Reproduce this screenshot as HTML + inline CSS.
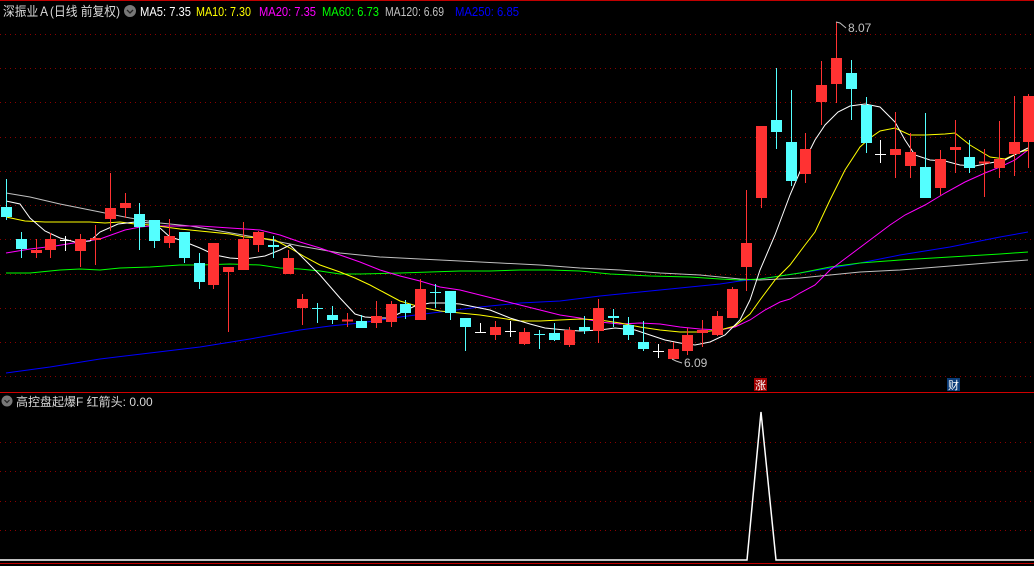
<!DOCTYPE html>
<html><head><meta charset="utf-8"><style>
html,body{margin:0;padding:0;background:#000;width:1034px;height:566px;overflow:hidden}
svg{display:block}
text{font-family:"Liberation Sans","Noto Sans CJK SC",sans-serif}
</style></head><body>
<svg width="1034" height="566" viewBox="0 0 1034 566" xmlns="http://www.w3.org/2000/svg">
<rect width="1034" height="566" fill="#000"/>
<line x1="0" y1="0.5" x2="1034" y2="0.5" stroke="#c00000"/>
<g stroke="#8b0000" stroke-dasharray="1 4" stroke-width="1">
<line x1="0" y1="34.5" x2="1034" y2="34.5"/><line x1="0" y1="68.5" x2="1034" y2="68.5"/>
<line x1="0" y1="102.5" x2="1034" y2="102.5"/><line x1="0" y1="137.5" x2="1034" y2="137.5"/>
<line x1="0" y1="171.5" x2="1034" y2="171.5"/><line x1="0" y1="205.5" x2="1034" y2="205.5"/>
<line x1="0" y1="239.5" x2="1034" y2="239.5"/><line x1="0" y1="274.5" x2="1034" y2="274.5"/>
<line x1="0" y1="308.5" x2="1034" y2="308.5"/><line x1="0" y1="342.5" x2="1034" y2="342.5"/>
<line x1="0" y1="376.5" x2="1034" y2="376.5"/>
<line x1="0" y1="442.5" x2="1034" y2="442.5"/><line x1="0" y1="471.5" x2="1034" y2="471.5"/>
<line x1="0" y1="501.5" x2="1034" y2="501.5"/><line x1="0" y1="530.5" x2="1034" y2="530.5"/>
</g>
<g fill="none" stroke-width="1">
<polyline stroke="#0000ff" points="6,373 50,367 100,359 150,353 200,347 250,339 300,330 330,326 360,323 400,317 440,312 480,307 520,303 560,301 600,296 640,292 680,288 720,284 740,281 760,279 800,273 850,265 900,255 950,247 1000,237 1028,232"/>
<polyline stroke="#c0c0c0" points="6,193 30,197 60,204 80,208 100,212 130,218 160,223 190,226 220,231 260,238 300,246 340,253 380,257 420,259 460,261 500,263 540,265 580,268 620,270 660,273 700,275 720,277 740,279 760,280 780,279 800,278 830,275 860,272 900,270 950,266 1000,262 1028,260"/>
<polyline stroke="#00ff00" points="6,273 30,273 60,270 80,269 100,270 120,268 150,267 180,265 200,265 230,264 260,265 280,268 300,269 320,271 340,274 360,274 400,273 430,272 460,271 490,271 520,270 550,270 580,271 610,274 650,276 690,277 720,279 740,280 760,279 780,276 800,273 830,267 860,263 900,260 950,257 1000,254 1028,252"/>
<polyline stroke="#ff00ff" points="6,253 30,249 55,246 80,242 100,239 125,230 140,227 150,226 170,226 200,226 230,228 260,230 280,235 300,242 320,248 340,255 360,262 380,270 400,276 420,281 440,287 460,290 480,295 500,300 520,305 540,310 560,315 580,318 600,322 620,324 640,323 660,324 680,327 700,329 720,330 735,327 750,320 765,310 780,302 790,299 800,293 815,285 830,270 850,255 870,240 890,225 905,215 925,205 945,193 965,182 985,173 1000,167 1015,160 1028,150"/>
<polyline stroke="#ffff00" points="6,217 25,221 45,222 60,222 75,222 90,222 105,223 120,222 135,224 150,225 165,227 180,229 200,231 230,234 245,237 260,238 275,240 290,248 305,257 320,265 340,272 355,278 370,285 385,293 400,301 420,307 440,311 460,313 480,315 500,318 520,321 540,321 560,320 580,319 600,320 620,323 640,327 660,330 680,332 700,332 720,330 735,326 750,314 760,300 775,280 790,265 805,245 815,232 830,200 845,170 860,147 870,138 880,131 895,128 910,135 925,135 945,134 955,133 970,145 990,157 1005,159 1020,152 1028,150"/>
<polyline stroke="#ffffff" points="6,201 20,204 30,218 45,231 60,238 75,242 90,241 100,232 118,224 135,222 150,223 160,228 170,237 180,240 190,244 200,248 215,255 230,258 245,259 265,256 280,250 290,245 300,255 320,275 340,298 355,314 365,317 380,318 390,318 400,313 415,306 430,303 445,303 460,304 470,306 490,310 510,318 530,324 545,328 565,330 580,331 600,330 615,328 635,330 650,335 665,340 680,343 695,345 710,342 725,335 740,320 750,300 760,270 775,235 790,195 805,160 815,140 825,125 838,112 850,106 865,104 880,107 895,122 905,140 915,155 930,160 945,161 960,165 975,166 990,163 1005,160 1020,152 1028,148"/>
</g>
<g id="c"></g>
<g fill="#c0c0c0" font-size="12">
<text x="848" y="32">8.07</text>
<text x="684" y="367">6.09</text>
</g>
<polyline points="846,28 840,23 836,22" fill="none" stroke="#c0c0c0"/>
<polyline points="682,363 676,361 672,359" fill="none" stroke="#c0c0c0"/>
<rect x="754" y="378" width="13" height="13" fill="#a00000"/>
<text x="755" y="389" font-size="11" fill="#fff">涨</text>
<rect x="947" y="378" width="13" height="13" fill="#0b3c78"/>
<text x="948" y="389" font-size="11" fill="#fff">财</text>
<line x1="0" y1="392.5" x2="1034" y2="392.5" stroke="#d00000"/>
<line x1="0" y1="563.5" x2="1034" y2="563.5" stroke="#c00000"/>
<polyline points="0,560 747,560 761,412 776,560 1034,560" fill="none" stroke="#fff" stroke-width="1.5"/>
<text x="3" y="16" font-size="13" fill="#d8d8d8" textLength="117" lengthAdjust="spacingAndGlyphs">深振业Ａ(日线 前复权)</text>
<circle cx="130" cy="11" r="6" fill="#777"/>
<polyline points="127,10 130,13 133,10" fill="none" stroke="#222" stroke-width="1.3"/>
<g font-size="13">
<text x="140" y="16" fill="#fff" textLength="51" lengthAdjust="spacingAndGlyphs">MA5: 7.35</text>
<text x="196" y="16" fill="#ffff00" textLength="55" lengthAdjust="spacingAndGlyphs">MA10: 7.30</text>
<text x="259" y="16" fill="#ff00ff" textLength="57" lengthAdjust="spacingAndGlyphs">MA20: 7.35</text>
<text x="322" y="16" fill="#00ff00" textLength="57" lengthAdjust="spacingAndGlyphs">MA60: 6.73</text>
<text x="385" y="16" fill="#c0c0c0" textLength="59" lengthAdjust="spacingAndGlyphs">MA120: 6.69</text>
<text x="455" y="16" fill="#0000ff" textLength="64" lengthAdjust="spacingAndGlyphs">MA250: 6.85</text>
</g>
<circle cx="7" cy="401" r="5.5" fill="#777"/>
<polyline points="4.5,400 7,402.5 9.5,400" fill="none" stroke="#222" stroke-width="1.2"/>
<text x="16" y="406" font-size="12" fill="#d8d8d8">高控盘起爆F  红箭头: 0.00</text>
</svg>
<script>
var d=[
[6,'c',207,217,179,220],[21,'c',239,249,232,258],[36,'r',250,253,239,258],[50,'r',239,250,233,258],[65,'w',240,240,236,251],
[80,'r',239,251,234,267],[95,'r',238,240,225,265],[110,'r',208,219,173,231],[125,'r',203,208,193,218],[139,'c',214,227,203,250],
[154,'c',220,241,220,248],[169,'r',236,243,219,248],[184,'c',232,258,232,263],[199,'c',263,282,253,289],[213,'r',243,285,243,289],
[228,'r',267,272,267,332],[243,'r',239,270,222,270],[258,'r',232,245,231,252],[273,'c',245,247,236,258],[288,'r',258,274,250,274],
[302,'r',299,308,294,325],[317,'c',308,308,303,323],[332,'c',315,320,306,324],[347,'r',320,321,313,327],[361,'c',321,328,315,328],
[376,'r',316,323,301,328],[391,'r',304,322,301,327],[405,'c',304,313,300,319],[420,'r',289,320,279,320],[435,'c',292,292,284,308],
[450,'c',291,313,291,320],[465,'c',318,327,318,351],[480,'w',332,332,323,332],[495,'r',327,335,321,340],[510,'w',331,331,321,337],
[524,'r',332,344,328,345],[539,'c',334,334,330,349],[554,'c',333,340,323,341],[569,'r',330,345,327,347],[584,'c',327,331,316,334],
[598,'r',308,331,299,343],[613,'c',316,318,309,327],[628,'c',325,335,317,340],[643,'c',342,349,321,351],[658,'w',351,351,344,358],
[673,'r',349,359,342,359],[687,'r',335,351,328,355],[702,'r',330,333,320,347],[717,'r',316,335,311,336],[732,'r',289,318,287,318],
[746,'r',243,267,190,291],[761,'r',126,198,126,208],[776,'c',120,132,68,149],[791,'c',142,181,90,186],[805,'r',149,174,133,183],
[821,'r',85,102,61,125],[836,'r',58,84,22,103],[851,'c',73,89,60,120],[866,'c',105,143,97,153],[880,'w',154,154,140,163],
[895,'r',149,155,112,178],[910,'r',152,166,133,178],[925,'c',167,198,113,198],[940,'r',159,188,150,195],[955,'r',147,150,120,173],
[969,'c',157,168,140,173],[984,'r',162,163,149,197],[999,'r',159,168,121,178],[1014,'r',142,154,96,176],[1028,'r',96,142,94,168]];
var col={r:'#ff3232',c:'#54ffff',w:'#ffffff'},s='';
d.forEach(function(e){var x=e[0],c=col[e[1]],t=e[2],b=e[3];
s+='<line x1="'+(x+0.5)+'" y1="'+e[4]+'" x2="'+(x+0.5)+'" y2="'+e[5]+'" stroke="'+c+'"/>';
if(b-t<2){s+='<line x1="'+(x-5)+'" y1="'+(t+0.5)+'" x2="'+(x+6)+'" y2="'+(t+0.5)+'" stroke="'+c+'" stroke-width="'+(b-t+1)+'"/>';}
else s+='<rect x="'+(x-5)+'" y="'+t+'" width="11" height="'+(b-t)+'" fill="'+c+'"/>';});
document.getElementById('c').innerHTML=s;
</script>
</body></html>
